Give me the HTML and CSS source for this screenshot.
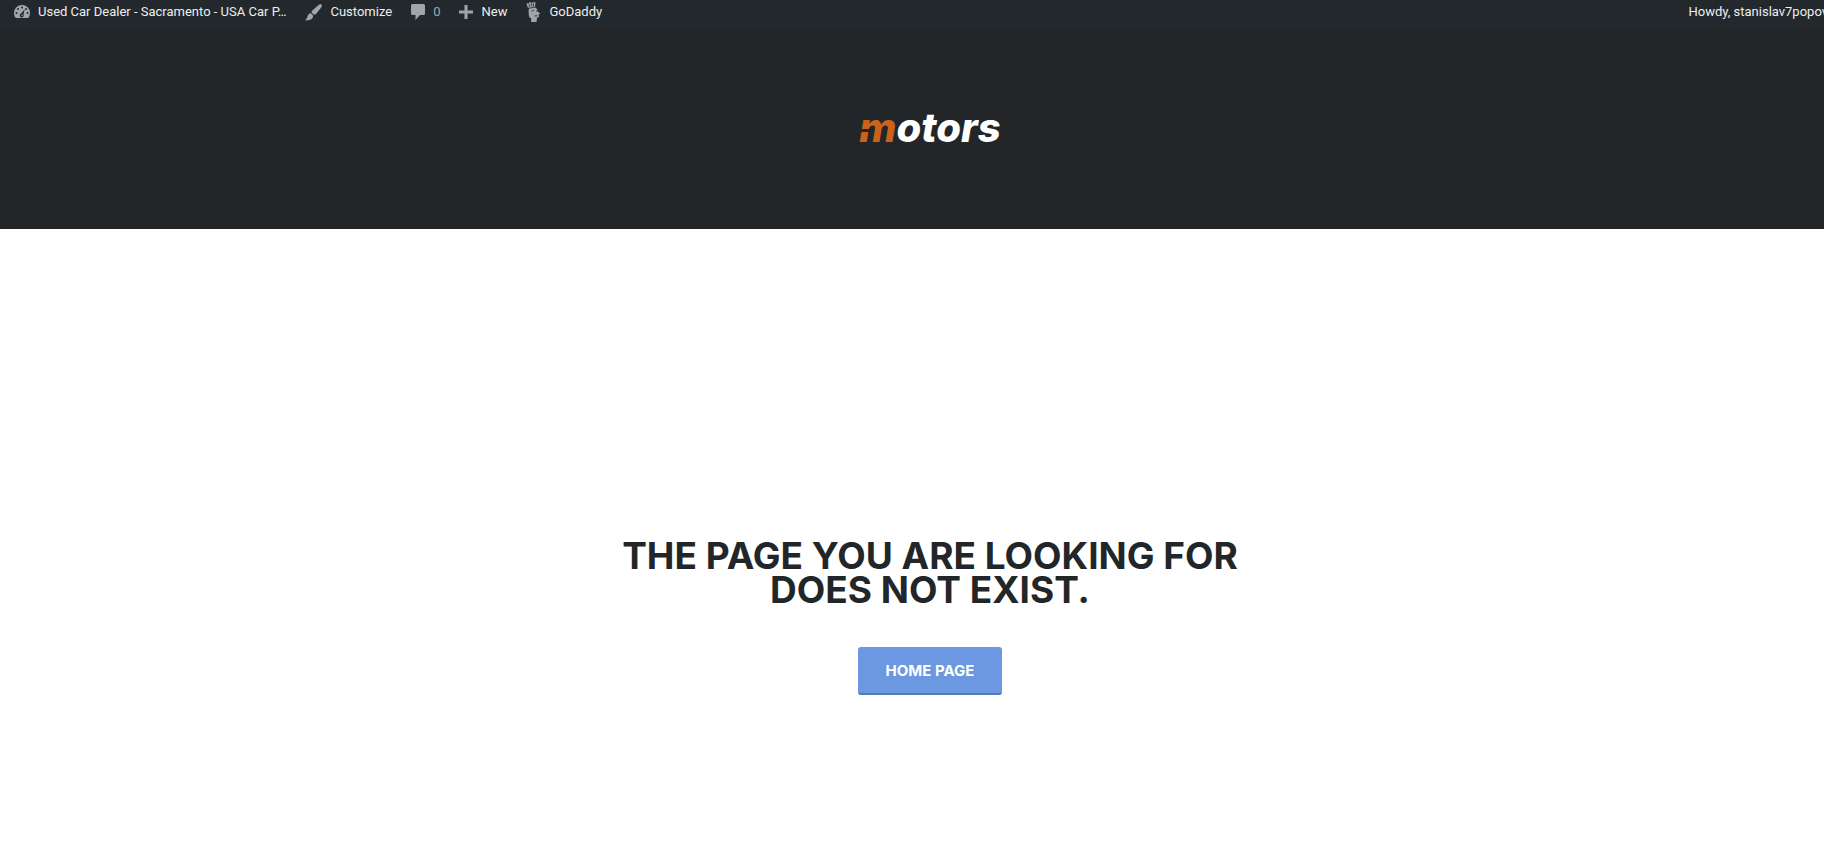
FILE: index.html
```html
<!DOCTYPE html>
<html lang="en">
<head>
    <meta charset="UTF-8">
    <meta name="viewport" content="width=device-width, initial-scale=1.0">
    <title>Page not found - Motors</title>
    <link rel="stylesheet" href="styles.css">
</head>
<body>
    <div class="page">
        <nav class="admin-bar" aria-label="Toolbar">
            <a href="#" class="bar-site">
                <svg width="16" height="14" viewBox="0 0 16 14" aria-hidden="true">
                    <path fill="currentColor" d="M8 0a8 8 0 0 0-8 8c0 2 .7 3.800 1.800 5h12.400A8 8 0 0 0 8 0z"/>
                    <g fill="#23282d">
                        <circle cx="8" cy="2.500" r="1"/>
                        <circle cx="4" cy="4" r="1"/>
                        <circle cx="12" cy="4" r="1"/>
                        <circle cx="2.500" cy="8" r="1"/>
                        <circle cx="13.500" cy="8" r="1"/>
                        <path d="M10.600 4.500L9.500 9.500a2 2 0 1 1-2.500-.9z"/>
                    </g>
                    <circle cx="8" cy="10.300" r=".8" fill="currentColor"/>
                </svg>
                Used Car Dealer - Sacramento - USA Car P…
            </a>
            <a href="#" class="bar-customize">
                <svg width="17" height="17" viewBox="0 0 17 17" aria-hidden="true">
                    <path fill="currentColor" d="M16.500.5c.8.8.2 2.200-.5 3.200L11 10c-.6.8-1.500 1-2.300.4L7 8.900c-.8-.8-.5-1.700.3-2.400L13 1.500C14.200.5 15.700-.2 16.500.5zM5.800 9.300l2.300 2.200C8.500 14.800 5 16.800 0 16.300c1.800-1 2-2.300 2.500-3.800.6-2 1.700-3.200 3.300-3.200z"/>
                </svg>
                Customize
            </a>
            <a href="#" class="bar-comments" aria-label="0 comments">
                <svg width="14" height="16" viewBox="0 0 14 16" aria-hidden="true">
                    <path fill="currentColor" d="M1.500 0h11A1.500 1.500 0 0 1 14 1.500v8a1.500 1.500 0 0 1-1.500 1.500H9l-4.500 5V11h-3A1.500 1.500 0 0 1 0 9.500v-8A1.500 1.500 0 0 1 1.500 0z"/>
                </svg>
                0
            </a>
            <a href="#" class="bar-new">
                <svg width="14" height="14" viewBox="0 0 14 14" aria-hidden="true">
                    <path fill="currentColor" d="M5.500 0h3v5.500H14v3H8.500V14h-3V8.500H0v-3h5.500z"/>
                </svg>
                New
            </a>
            <a href="#" class="bar-godaddy">
                <svg width="15" height="20" viewBox="0 0 15 20" aria-hidden="true">
                    <path fill="currentColor" d="M.5 1.500L3 1l.5-1L6 .8 8 0l1.500.5-.5 4.700 2 1.800.5 2.500 2.800 1.800-1.800 1.200.8 2-2.300 1.500L10.500 20H5l.3-3L3 14.500l-.5-5L3 6 1.500 5z"/>
                    <path fill="none" stroke="#23282d" stroke-width=".8" d="M2.800 1.500l1 3.300M5.200 1.200l.6 3.200M7.500 1.200l-.1 3.400M3 6.200l6-1M5.500 9l2.500-.8M10 9l1.200.2M8.500 14l3-.2"/>
                </svg>
                GoDaddy
            </a>
            <a href="#" class="bar-account">Howdy, stanislav7popov</a>
        </nav>

        <header class="site-header">
            <a href="#" class="logo"><span class="logo-m">m</span>otors</a>
        </header>

        <main class="not-found">
            <h1>The page you are looking for<br>does not exist.</h1>
            <a href="#" class="button">Home page</a>
        </main>
    </div>
</body>
</html>
```
FILE: styles.css
```css
:root {
    --dark: #232628;
    --bar: #23282d;
    --orange: #cc6119;
    --blue: #6c98e1;
}

* {
    box-sizing: border-box;
}

body {
    margin: 0;
    background: #fff;
    color: var(--dark);
    font-family: Inter, sans-serif;
    overflow-x: hidden;
}

a {
    color: inherit;
    text-decoration: none;
}

/* page runs slightly past the right edge of the window */
.page {
    width: calc(100% + 36px);
}

.admin-bar {
    display: flex;
    align-items: center;
    height: 28px;
    padding: 0 0 4px 14px;
    background: var(--bar);
    color: #eee;
    font: 13px/24px Roboto, sans-serif;
    white-space: nowrap;
}

.admin-bar a {
    display: flex;
    align-items: center;
    gap: 8px;
    margin-right: 19px;
}

.admin-bar svg {
    flex: none;
    color: #a0a5aa;
}

.admin-bar .bar-comments {
    color: #a0a5aa;
}

.admin-bar .bar-account {
    margin: 0 32px 0 auto;
}

.site-header {
    display: flex;
    justify-content: center;
    padding: 75px 0 76px;
    background: var(--dark);
}

.logo {
    color: #fff;
    font: italic 800 40px/50px Inter, sans-serif;
}

.logo-m {
    position: relative;
    color: var(--orange);
}

/* slit through the first leg of the m */
.logo-m::before {
    content: "";
    position: absolute;
    left: 0;
    top: 26px;
    width: 12px;
    height: 3px;
    background: var(--dark);
}

.not-found {
    display: flex;
    flex-direction: column;
    align-items: center;
    padding: 310px 20px 170px;
    text-align: center;
}

h1 {
    margin: 0 0 40px;
    font-size: 37px;
    font-weight: 700;
    line-height: 34px;
    text-transform: uppercase;
}

.button {
    padding: 2px 28px 0;
    border-bottom: 2px solid #567ab4;
    border-radius: 3px;
    background: var(--blue);
    color: #fff;
    font-size: 15px;
    font-weight: 700;
    line-height: 44px;
    text-transform: uppercase;
}
```
